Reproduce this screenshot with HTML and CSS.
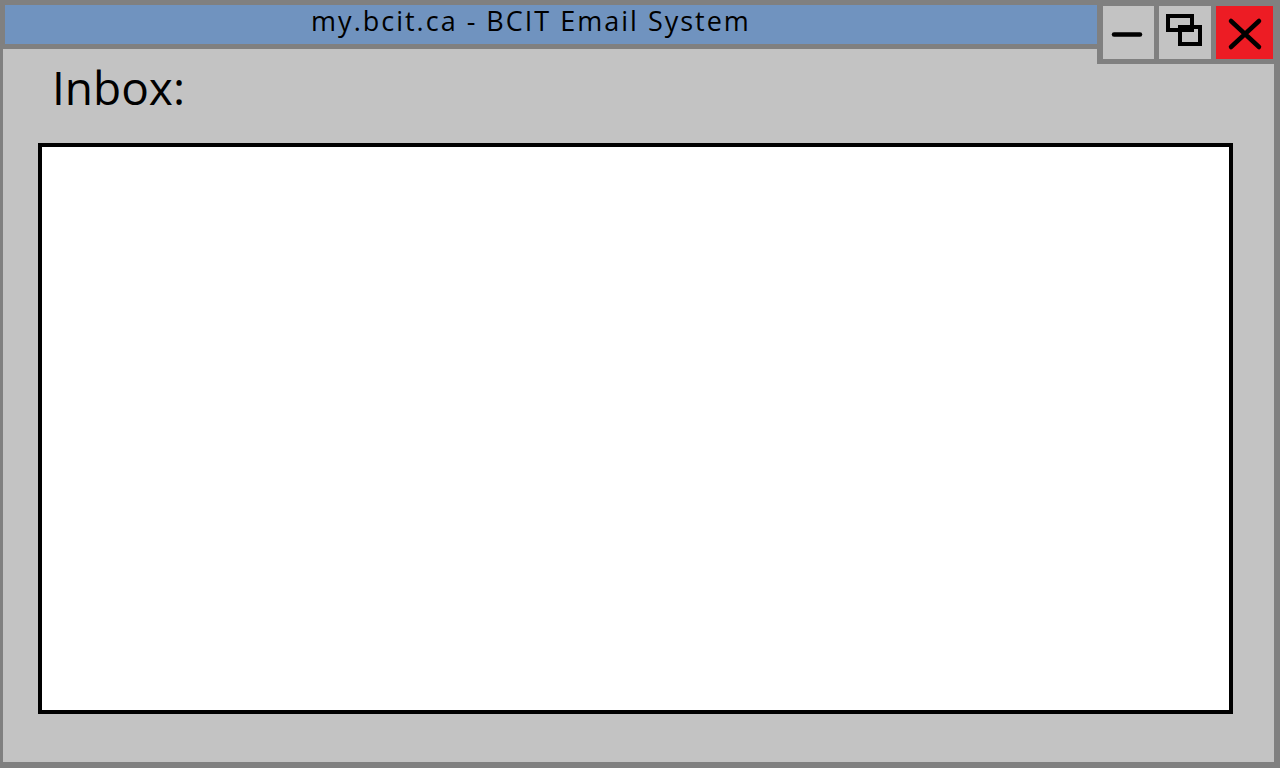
FILE: index.html
```html
<!DOCTYPE html>
<html lang="en">
<head>
<meta charset="utf-8">
<title>my.bcit.ca - BCIT Email System</title>
<link rel="stylesheet" href="styles.css">
</head>
<body>
<div class="window">
  <div class="titlebar">
    <div class="title">my.bcit.ca - BCIT Email System</div>
  </div>
  <div class="controls">
    <div class="btn">
      <svg width="51" height="53" viewBox="0 0 51 53"><line x1="11" y1="28.5" x2="37" y2="28.5" stroke="#000" stroke-width="4.5" stroke-linecap="round"/></svg>
    </div>
    <div class="btn">
      <svg width="52" height="53" viewBox="0 0 52 53"><rect x="9" y="10" width="24" height="14" fill="none" stroke="#000" stroke-width="4"/><rect x="21" y="21" width="20" height="17" fill="none" stroke="#000" stroke-width="4"/></svg>
    </div>
    <div class="btn close">
      <svg width="57" height="53" viewBox="0 0 57 53"><path d="M15 15 L43 41 M43 15 L15 41" stroke="#000" stroke-width="4.5" stroke-linecap="round"/></svg>
    </div>
  </div>
  <div class="content">
    <h1 class="heading">Inbox:</h1>
    <div class="inbox"></div>
  </div>
</div>
</body>
</html>
```

FILE: styles.css
```css
html, body {
  margin: 0;
  padding: 0;
}
body {
  width: 1280px;
  height: 768px;
  overflow: hidden;
  font-family: "Open Sans", "DejaVu Sans", sans-serif;
}
.window {
  position: relative;
  width: 1280px;
  height: 768px;
  display: flex;
  flex-direction: column;
  background: #808080;
}
.titlebar {
  height: 39px;
  padding: 5px 183px 5px 5px;
  display: flex;
}
.title {
  flex: 1;
  background: #7093bf;
  color: #000;
  font-size: 27px;
  letter-spacing: 2px;
  line-height: 31px;
  text-align: center;
  padding-right: 40px;
  white-space: nowrap;
}
.controls {
  position: absolute;
  top: 0;
  right: 0;
  width: 170px;
  height: 53px;
  padding: 6px 7px 5px 6px;
  background: #808080;
  display: flex;
  gap: 5px;
}
.btn {
  width: 51px;
  height: 53px;
  background: #c3c3c3;
  display: flex;
}
.btn:nth-child(2) {
  width: 52px;
}
.btn.close {
  width: 57px;
  background: #ed1c24;
}
.content {
  flex: 1;
  margin: 0 6px 6px 3px;
  background: #c3c3c3;
  padding: 0 41px 48px 35px;
  display: flex;
  flex-direction: column;
}
.heading {
  margin: 0;
  height: 94px;
  padding-left: 14px;
  font-weight: normal;
  font-size: 46px;
  line-height: 76px;
  color: #000;
}
.inbox {
  flex: 1;
  background: #fff;
  border: 4px solid #000;
}
```
